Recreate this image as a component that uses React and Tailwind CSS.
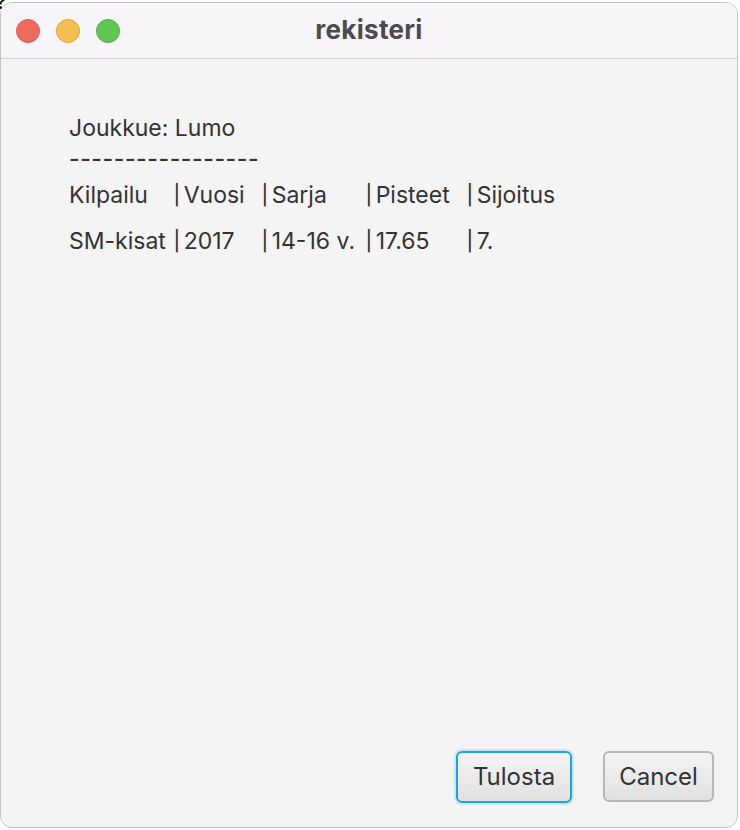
import React from 'react'

const header = ['Kilpailu', 'Vuosi', 'Sarja', 'Pisteet', 'Sijoitus']
const rows = [['SM-kisat', '2017', '14-16 v.', '17.65', '7.']]

const Row = ({ cells, className }) => (
  <div className={'grid grid-cols-[104px_88px_104px_101px_auto] ' + className}>
    {cells.map((c, i) => (
      <div key={i} className="whitespace-nowrap">
        {i > 0 && <span className="mr-[3px] inline-block scale-y-[0.85]">|</span>}
        {c}
      </div>
    ))}
  </div>
)

const App = () => {
  return (
    <div className="relative w-[740px] h-[830px] bg-white overflow-hidden" style={{ fontFamily: 'Inter, "Noto Sans", sans-serif' }}>
      <span className="absolute left-[-4px] top-[-8px] text-[20px] leading-[20px] text-black">?</span>
      <div className="relative mt-[2px] w-[738px] h-[826px] rounded-[12px] border border-[#c4c4c4] overflow-hidden flex flex-col bg-[#f4f4f4]">
        <div className="h-[56px] shrink-0 bg-[#f7f5f8] border-b border-[#d2d2d2] relative flex items-center justify-center">
          <div className="absolute left-[15px] top-[16px] flex gap-[16px]">
            <div className="w-[24px] h-[24px] rounded-full bg-[#ee6a5f] border border-[#d95b51]" />
            <div className="w-[24px] h-[24px] rounded-full bg-[#f5bf4f] border border-[#dfa73d]" />
            <div className="w-[24px] h-[24px] rounded-full bg-[#61c554] border border-[#50ad45]" />
          </div>
          <div className="text-[26px] font-bold text-[#4b4b4b] mt-[-2px] tracking-[0.3px]">rekisteri</div>
        </div>
        <div className="flex-1 flex flex-col pl-[68px] pt-[53px] text-[23px] text-[#333333] leading-[32px]">
          <div>Joukkue: Lumo</div>
          <div className="tracking-[0.55px] leading-[30px] font-medium">-----------------</div>
          <Row cells={header} className="mt-[5px]" />
          <div className="mt-[14px]">
            {rows.map((r, i) => (
              <Row key={i} cells={r} />
            ))}
          </div>
          <div className="flex-1" />
          <div className="flex justify-end gap-[31px] pr-[23px] pb-[24px]">
            <button className="w-[116px] h-[52px] rounded-[6px] border-2 border-[#1ca4de] ring-2 ring-[#c9e8f5] bg-gradient-to-b from-[#f4f4f4] to-[#e1e1e1] text-[24px] text-[#333333]">
              Tulosta
            </button>
            <button className="w-[111px] h-[51px] rounded-[6px] border-2 border-[#b7b7b7] bg-gradient-to-b from-[#f4f4f4] to-[#e1e1e1] text-[24px] text-[#333333]">
              Cancel
            </button>
          </div>
        </div>
      </div>
    </div>
  )
}

export default App
